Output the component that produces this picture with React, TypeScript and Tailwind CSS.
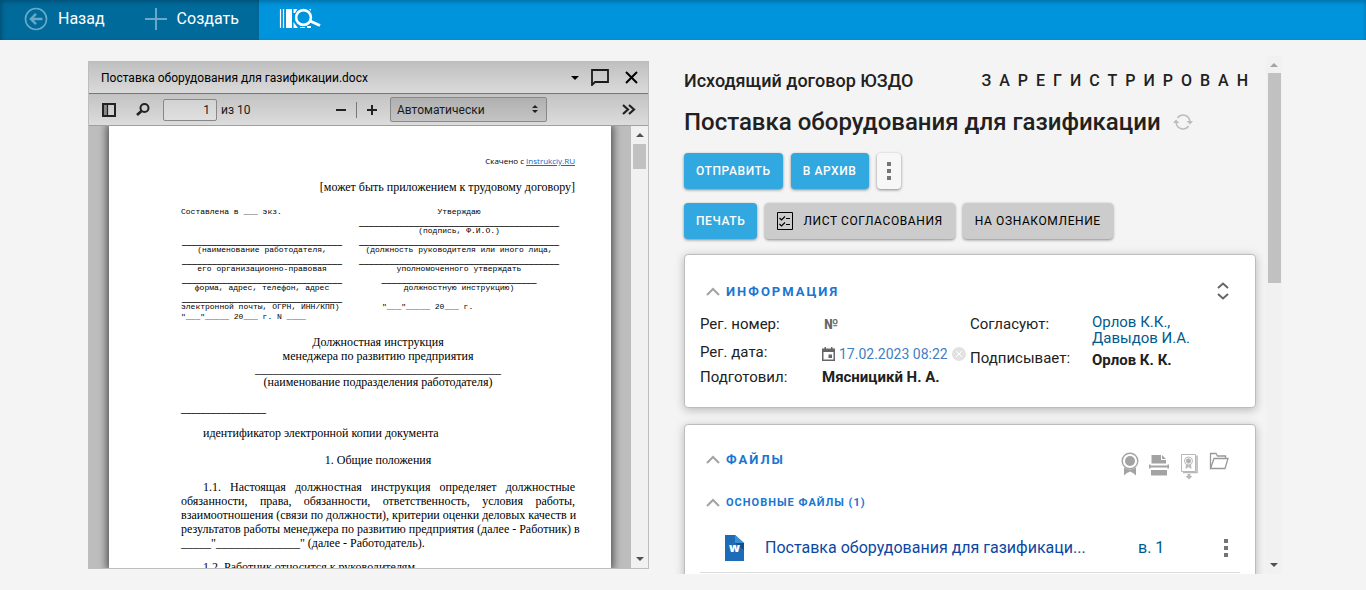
import React, { useState } from 'react';
import clsx from 'clsx';

interface IconProps {
  className?: string;
}

const BackIcon: React.FC<IconProps> = ({ className }) => (
  <svg viewBox="0 0 26 26" className={className} fill="none" stroke="currentColor">
    <circle cx="13" cy="13" r="11.4" strokeWidth="1.8" />
    <path d="M20 13H8M13 7.5L7.5 13L13 18.5" strokeWidth="2.6" />
  </svg>
);

const BarcodeSearchIcon: React.FC<IconProps> = ({ className }) => (
  <svg viewBox="0 0 42 22" className={className} fill="none">
    <path d="M1.5 1V20M4.5 1V20" stroke="currentColor" strokeWidth="1.2" />
    <path d="M7 1H13V20H7ZM14.5 1H18.5L16 5H14.5ZM14.5 14L19 20H14.5ZM30 1H32V3ZM21 19H26V20H21ZM28 18H32V20H28Z" fill="currentColor" />
    <circle cx="24.5" cy="9.5" r="7.4" stroke="currentColor" strokeWidth="2.6" />
    <path d="M31 13L41 17.5" stroke="currentColor" strokeWidth="3" />
  </svg>
);

const Chevron: React.FC<IconProps> = ({ className }) => (
  <svg viewBox="0 0 14 9" className={clsx('h-[9px] w-3.5', className)} fill="none" stroke="#a3a3a3" strokeWidth="2">
    <path d="M1 8L7 2L13 8" />
  </svg>
);

const DotsIcon: React.FC<IconProps> = ({ className }) => (
  <svg viewBox="0 0 4 18" className={clsx('h-[18px] w-1', className)} fill="#757575">
    <path d="M0 0H4V4H0ZM0 7H4V11H0ZM0 14H4V18H0Z" />
  </svg>
);

const Arrow: React.FC<{ up?: boolean; color: string }> = ({ up, color }) => (
  <svg viewBox="0 0 8 4" className="h-1 w-2" fill={color}>
    <path d={up ? 'M0 4L4 0L8 4Z' : 'M0 0L4 4L8 0Z'} />
  </svg>
);

const PRIMARY_BUTTON =
  'h-9 rounded bg-[#31a8e0] px-3 text-xs font-medium tracking-wider text-white shadow-[0_1px_3px_rgba(0,0,0,0.45)]';
const GRAY_BUTTON =
  'h-9 rounded bg-[#cccccc] px-3 text-xs tracking-wider text-black shadow-[0_1px_3px_rgba(0,0,0,0.45)]';

// Two column form in the head of the document
const formRows: { left?: string; right?: string; line?: boolean; alignLeft?: boolean }[] = [
  { left: 'Составлена в ___ экз.', right: 'Утверждаю', alignLeft: true },
  { right: '_'.repeat(40), line: true },
  { right: '(подпись, Ф.И.О.)' },
  { left: '_'.repeat(32), right: '_'.repeat(40), line: true },
  { left: '(наименование работодателя,', right: '(должность руководителя или иного лица,' },
  { left: '_'.repeat(32), right: '_'.repeat(40), line: true },
  { left: 'его организационно-правовая', right: 'уполномоченного утверждать' },
  { left: '_'.repeat(32), right: '_'.repeat(31), line: true },
  { left: 'форма, адрес, телефон, адрес', right: 'должностную инструкцию)' },
  { left: '_'.repeat(32), line: true },
  { left: 'электронной почты, ОГРН, ИНН/КПП)', right: '"___"_____ 20___ г.', alignLeft: true },
  { left: '"___"_____ 20___ г. N ____', alignLeft: true },
];

const paragraphLines = [
  '1.1. Настоящая должностная инструкция определяет должностные',
  'обязанности, права, обязанности, ответственность, условия работы,',
  'взаимоотношения (связи по должности), критерии оценки деловых качеств и',
  'результатов работы менеджера по развитию предприятия (далее - Работник) в',
];

const Header = () => (
  <header className="flex h-10 shrink-0 bg-[#0094dc] shadow-[inset_0_2px_4px_rgba(0,0,0,0.25)]">
    <div className="flex w-[259px] items-center bg-[#006a9b] pb-0.5 pl-6 text-base text-white shadow-[inset_2px_2px_4px_rgba(0,0,0,0.25)]">
      <button className="flex items-center gap-2.5">
        <BackIcon className="h-6 w-6 text-[#67a9c8]" />
        Назад
      </button>
      <button className="ml-10 flex items-center gap-2.5">
        <svg viewBox="0 0 22 22" className="h-[22px] w-[22px]" stroke="#67a9c8" strokeWidth="2">
          <path d="M11 0V22M0 11H22" />
        </svg>
        Создать
      </button>
    </div>
    <button className="ml-5 text-white" aria-label="Поиск по штрихкоду">
      <BarcodeSearchIcon className="-mt-0.5 h-[22px] w-[42px]" />
    </button>
  </header>
);

const DocumentPage = () => (
  <div className="min-w-0 flex-1 bg-[#bdbdbd] px-5">
    <article className="h-full overflow-hidden bg-white pr-9 pl-[72px] font-['Liberation_Serif',serif] text-xs leading-[14px] text-black shadow-[0_0_8px_2px_rgba(0,0,0,0.6)]">
      <p className="pt-[30px] text-right font-['Open_Sans',sans-serif] text-[8px] leading-[10px]">
        Скачено с{' '}
        <a href="#source" className="text-[#2065c0] underline">
          Instrukciy.RU
        </a>
      </p>
      <p className="mt-3.5 text-right">[может быть приложением к трудовому договору]</p>
      <div className="mt-[13px]">
        {formRows.map((row, i) => (
          <div
            key={i}
            className={clsx(
              'grid grid-cols-[162px_202px] gap-x-[15px] whitespace-nowrap',
              row.line
                ? 'h-[9px] text-[10px] leading-[9px] font-bold'
                : "h-[10px] font-['Liberation_Mono',monospace] text-[8px] leading-[10px]"
            )}
          >
            <span className={row.alignLeft ? 'text-left' : 'text-center'}>{row.left}</span>
            <span className={row.alignLeft && i > 0 ? 'pl-6 text-left' : 'text-center'}>{row.right}</span>
          </div>
        ))}
      </div>
      <p className="mt-[13px] text-center">
        Должностная инструкция
        <br />
        менеджера по развитию предприятия
      </p>
      <p className="text-center leading-[13px]">
        {'_'.repeat(41)}
        <br />
        (наименование подразделения работодателя)
      </p>
      <p className="mt-[13px] text-[10px] font-bold">{'_'.repeat(17)}</p>
      <p className="mt-2.5 indent-[22px]">идентификатор электронной копии документа</p>
      <p className="mt-[13px] text-center">1. Общие положения</p>
      <p className="mt-[13px]">
        {paragraphLines.map((line, i) => (
          <span
            key={i}
            className={clsx('block text-justify whitespace-nowrap [text-align-last:justify]', i === 0 && 'indent-[22px]')}
          >
            {line}
          </span>
        ))}
        _____"______________" (далее - Работодатель).
      </p>
      <p className="mt-2.5 indent-[22px]">1.2. Работник относится к руководителям.</p>
    </article>
  </div>
);

const Viewer = () => {
  const [page, setPage] = useState('1');

  return (
    <section className="my-[21px] flex min-h-0 min-w-0 flex-col border border-[#bdbdbd] text-[#1a1a1a]">
      <div className="flex h-[31px] shrink-0 items-center bg-linear-to-b from-[#c0c0c0] to-[#dadada] pr-2.5 pl-3">
        <h2 className="flex-1 text-xs text-black">Поставка оборудования для газификации.docx</h2>
        <button aria-label="Версии">
          <Arrow color="#000" />
        </button>
        <button className="ml-3" aria-label="Комментарии">
          <svg viewBox="0 0 18 17" className="h-[17px] w-[18px]" fill="none" stroke="#1a1a1a" strokeWidth="1.8">
            <path d="M1 1H17V13H4L1 16Z" />
          </svg>
        </button>
        <button className="ml-4" aria-label="Закрыть">
          <svg viewBox="0 0 13 13" className="h-[13px] w-[13px]" stroke="#000" strokeWidth="2">
            <path d="M1 1L12 12M12 1L1 12" />
          </svg>
        </button>
      </div>
      <div className="flex h-8 shrink-0 items-center border-t border-[#777] bg-linear-to-b from-[#c3c3c3] to-[#dcdcdc] pr-3 pl-[13px] text-xs">
        <button aria-label="Боковая панель">
          <svg viewBox="0 0 14 14" className="h-3.5 w-3.5" fill="none" stroke="#222" strokeWidth="2">
            <path d="M1 1H5V13H1Z" fill="#888" stroke="none" />
            <path d="M1 1H13V13H1Z" />
            <path d="M5.5 1V13" strokeWidth="1.2" />
          </svg>
        </button>
        <button className="ml-5" aria-label="Найти">
          <svg viewBox="0 0 14 13" className="h-[13px] w-3.5" fill="none" stroke="#222" strokeWidth="2">
            <circle cx="8.5" cy="5" r="4" />
            <path d="M5.5 8L1 12" strokeWidth="2.6" />
          </svg>
        </button>
        <input
          aria-label="Страница"
          value={page}
          onChange={(e) => setPage(e.target.value)}
          className="ml-[13px] h-[22px] w-[54px] rounded-xs border border-[#888] bg-white/20 pr-1.5 text-right"
        />
        <span className="ml-1">из 10</span>
        <div className="flex flex-1 items-center justify-end">
          <button aria-label="Уменьшить">
            <svg viewBox="0 0 10 10" className="h-2.5 w-2.5" stroke="#222" strokeWidth="2">
              <path d="M0 5H10" />
            </svg>
          </button>
          <span className="mx-2.5 h-4 w-px bg-[#777]" />
          <button aria-label="Увеличить">
            <svg viewBox="0 0 10 10" className="h-2.5 w-2.5" stroke="#222" strokeWidth="2">
              <path d="M0 5H10M5 0V10" />
            </svg>
          </button>
          <div className="relative ml-[13px]">
            <select
              aria-label="Масштаб"
              className="h-[25px] w-[157px] appearance-none rounded-xs border border-[#888] bg-linear-to-b from-[#b0b0b0] to-[#c4c4c4] pl-1.5"
            >
              <option>Автоматически</option>
            </select>
            <svg viewBox="0 0 6 8" className="pointer-events-none absolute top-2 right-[9px] h-2 w-1.5" fill="#222">
              <path d="M0 3L3 0L6 3ZM0 5L3 8L6 5Z" />
            </svg>
          </div>
        </div>
        <button className="ml-[75px]" aria-label="Инструменты">
          <svg viewBox="0 0 14 11" className="h-[11px] w-3.5" fill="none" stroke="#222" strokeWidth="2.2">
            <path d="M1 1L6 5.5L1 10M7 1L12 5.5L7 10" />
          </svg>
        </button>
      </div>
      <div className="flex min-h-0 flex-1 overflow-hidden border-t border-[#a0a0a0]">
        <DocumentPage />
        <div className="flex w-[17px] shrink-0 flex-col items-center bg-[#f1f1f1] pt-[7px] pb-[7px]">
          <Arrow up color="#505050" />
          <div className="mt-[7px] h-[25px] w-[13px] bg-[#c1c1c1]" />
          <div className="flex-1" />
          <Arrow color="#505050" />
        </div>
      </div>
    </section>
  );
};

const InfoCard = () => (
  <section className="mt-[15px] h-[154px] rounded border border-[#bdbdbd] bg-white pt-6 pr-[26px] pl-[15px] shadow-[0_2px_10px_rgba(0,0,0,0.25)]">
    <div className="flex h-6 items-center">
      <button className="ml-1.5 flex items-center gap-1.5">
        <Chevron />
        <span className="pt-0.5 text-[13px] font-bold tracking-[2px] text-[#1976d2]">ИНФОРМАЦИЯ</span>
      </button>
      <button className="ml-auto" aria-label="Развернуть">
        <svg viewBox="0 0 12 18" className="h-[18px] w-3" fill="none" stroke="#666" strokeWidth="2">
          <path d="M1 6L6 1.5L11 6M1 12L6 16.5L11 12" />
        </svg>
      </button>
    </div>
    <div className="mt-[9px] flex text-[15px] whitespace-nowrap text-[#212121]">
      <dl className="w-[270px]">
        <div className="flex h-6 items-center">
          <dt className="w-[122px]">Рег. номер:</dt>
          <dd>
            <button className="pl-0.5 text-sm font-bold text-[#666]">№</button>
          </dd>
        </div>
        <div className="flex h-8 items-center">
          <dt className="w-[122px]">Рег. дата:</dt>
          <dd className="flex items-center gap-1 pt-1">
            <svg viewBox="0 0 13 14" className="h-3.5 w-[13px]" fill="#666">
              <path d="M2.5 0H4V1.5H9V0H10.5V1.5H13V14H0V1.5H2.5ZM1.5 5V12.5H11.5V5ZM6.5 7.5H10V11H6.5Z" fillRule="evenodd" />
            </svg>
            <span className="text-sm text-[#3f80c4]">17.02.2023 08:22</span>
            <button aria-label="Очистить дату">
              <svg viewBox="0 0 14 14" className="h-3.5 w-3.5">
                <circle cx="7" cy="7" r="7" fill="#e2e2e2" />
                <path d="M4 4L10 10M10 4L4 10" stroke="#fff" />
              </svg>
            </button>
          </dd>
        </div>
        <div className="flex h-[18px] items-center">
          <dt className="w-[122px]">Подготовил:</dt>
          <dd className="font-bold">Мясницикй Н. А.</dd>
        </div>
      </dl>
      <dl>
        <div className="flex h-[34px] leading-6">
          <dt className="w-[122px]">Согласуют:</dt>
          <dd className="flex flex-col pt-0.5 leading-4 text-[#005a8c]">
            <a href="#orlov">Орлов К.К.,</a>
            <a href="#davydov">Давыдов И.А.</a>
          </dd>
        </div>
        <div className="flex leading-6">
          <dt className="w-[122px]">Подписывает:</dt>
          <dd className="pt-0.5 font-bold">Орлов К. К.</dd>
        </div>
      </dl>
    </div>
  </section>
);

const FilesCard = () => (
  <section className="mt-4 rounded border border-[#bdbdbd] bg-white px-[15px] pt-[22px] pb-4 shadow-[0_2px_10px_rgba(0,0,0,0.25)]">
    <div className="flex h-6 items-center pl-1.5">
      <button className="flex items-center gap-1.5">
        <Chevron />
        <span className="pt-0.5 text-[13px] font-bold tracking-[2px] text-[#1976d2]">ФАЙЛЫ</span>
      </button>
      <div className="ml-auto flex items-start gap-2.5 pt-3.5 pr-[11px]">
        <button aria-label="Подписать">
          <svg viewBox="0 0 18 24" className="h-6 w-[18px]" fill="#a3a3a3">
            <circle cx="9" cy="9" r="7.8" fill="none" stroke="#a3a3a3" strokeWidth="1.4" />
            <circle cx="9" cy="9" r="5" />
            <path d="M3 15.5Q9 19.5 15 15.5V23.5L12 21L9 19.5L6 21L3 23.5Z" />
          </svg>
        </button>
        <button aria-label="Сканировать">
          <svg viewBox="0 0 20 24" className="h-6 w-5" fill="#a3a3a3">
            <path d="M2.5 3H12V8H17V11.5H2.5ZM13 3L17 7H13ZM2 18H18V23.5H2ZM0 12.5H1.5V13.5H18.5V12.5H20V16.5H18.5V15.5H1.5V16.5H0Z" />
          </svg>
        </button>
        <button className="ml-0.5" aria-label="Сертификат">
          <svg viewBox="0 0 17 28" className="h-7 w-[17px]" fill="none" stroke="#b8b8b8">
            <path d="M0.5 2.5H14.5V19.5H0.5Z" />
            <path d="M16 3.5V20.5H2" strokeWidth="1.6" />
            <circle cx="7.5" cy="9" r="4" />
            <circle cx="7.5" cy="9" r="2.2" fill="#b0b0b0" />
            <path d="M5 12.5L4.5 17L7.5 15L10.5 17L10 12.5L7.5 13.5Z" fill="#b8b8b8" stroke="none" />
            <path d="M6.5 22H9.5V24H11.5L8 27.5L4.5 24H6.5Z" fill="#b8b8b8" stroke="none" />
          </svg>
        </button>
        <button className="ml-px" aria-label="Открыть папку">
          <svg viewBox="0 0 20 18" className="h-[18px] w-5" fill="none" stroke="#999" strokeWidth="1.3">
            <path d="M1.5 16.5V1.5H7L8.5 4H16.5V6.5" />
            <path d="M1.5 16.5L5 6.5H19L16 16.5Z" />
          </svg>
        </button>
      </div>
    </div>
    <button className="mt-[21px] ml-1.5 flex h-5 items-center gap-1.5">
      <Chevron />
      <span className="pt-0.5 text-[11px] font-bold tracking-[1px] text-[#1976d2]">ОСНОВНЫЕ ФАЙЛЫ (1)</span>
    </button>
    <table className="mt-3 w-full table-fixed text-base">
      <tbody>
        <tr className="h-12 border-b border-[#dcdcdc]">
          <td className="w-[65px] pl-[25px]">
            <svg viewBox="0 0 19 26" className="h-[26px] w-[19px]">
              <path d="M0 0H10L19 8V26H0Z" fill="#1c6cb7" />
              <path d="M10 0L19 8H10Z" fill="#3c8fd0" />
              <path d="M10 8H19V15Z" fill="#154f85" />
              <text x="9.5" y="17" textAnchor="middle" fontFamily="Open Sans, sans-serif" fontWeight="800" fontSize="12" fill="#fff">
                w
              </text>
            </svg>
          </td>
          <td>
            <a href="#file" className="text-[#0d47a1]">Поставка оборудования для газификаци...</a>
          </td>
          <td className="w-[86px]">
            <a href="#version" className="text-[#005a8c]">в. 1</a>
          </td>
          <td className="w-4">
            <button className="block" aria-label="Действия с файлом">
              <DotsIcon />
            </button>
          </td>
        </tr>
      </tbody>
    </table>
  </section>
);

const DocumentCard = () => (
  <div className="my-4 flex min-h-0 min-w-0 overflow-hidden pl-4">
    <div className="min-w-0 flex-1 pt-[13px]">
      <div className="flex h-6 items-center justify-between text-[#212121]">
        <span className="text-lg font-medium">Исходящий договор ЮЗДО</span>
        <span className="text-base font-medium tracking-[8px]">ЗАРЕГИСТРИРОВАН</span>
      </div>
      <div className="mt-[13px] flex items-center gap-3">
        <h1 className="text-2xl leading-8 font-medium text-[#212121]">Поставка оборудования для газификации</h1>
        <button aria-label="Обновить">
          <svg viewBox="0 0 20 16" className="h-4 w-5" fill="none" stroke="#bdbdbd" strokeWidth="1.6">
            <path d="M4.5 4A6.8 6.8 0 0 1 16.8 7M15.5 12A6.8 6.8 0 0 1 3.2 9" />
            <path d="M13.5 7H20L17 10.5ZM0 9L3 5.5L6.5 9Z" fill="#bdbdbd" stroke="none" />
          </svg>
        </button>
      </div>
      <div className="mt-[15px] flex gap-2">
        <button className={PRIMARY_BUTTON}>ОТПРАВИТЬ</button>
        <button className={PRIMARY_BUTTON}>В АРХИВ</button>
        <button
          className="flex h-9 w-6 items-center justify-center rounded bg-[#f7f7f7] shadow-[0_1px_3px_rgba(0,0,0,0.45)]"
          aria-label="Ещё"
        >
          <DotsIcon />
        </button>
      </div>
      <div className="mt-3.5 flex gap-2">
        <button className={PRIMARY_BUTTON}>ПЕЧАТЬ</button>
        <button className={clsx(GRAY_BUTTON, 'flex items-center gap-2.5')}>
          <svg viewBox="0 0 16 18" className="h-[18px] w-4" fill="none" stroke="#000">
            <path d="M0.5 0.5H15.5V17.5H0.5Z" />
            <path d="M2.5 6L4.5 8L8 4.5M2.5 12L4.5 14L8 10.5M9 6.5H13M9 12.5H13" strokeWidth="1.2" />
          </svg>
          ЛИСТ СОГЛАСОВАНИЯ
        </button>
        <button className={GRAY_BUTTON}>НА ОЗНАКОМЛЕНИЕ</button>
      </div>
      <InfoCard />
      <FilesCard />
    </div>
    <div className="ml-2.5 flex w-4 shrink-0 flex-col items-center bg-[#f1f1f1] pt-[7px] pb-[7px]">
      <Arrow up color="#a3a3a3" />
      <div className="mt-1.5 h-[210px] w-[13px] bg-[#c1c1c1]" />
      <div className="flex-1" />
      <Arrow color="#505050" />
    </div>
  </div>
);

const App: React.FC = () => {
  return (
    <div className="flex h-screen flex-col overflow-hidden bg-[#f4f4f4] font-[Roboto,sans-serif]">
      <Header />
      <main className="grid min-h-0 flex-1 grid-cols-[561fr_614fr] gap-[19px] pr-[84px] pl-[88px]">
        <Viewer />
        <DocumentCard />
      </main>
    </div>
  );
};

export default App;
